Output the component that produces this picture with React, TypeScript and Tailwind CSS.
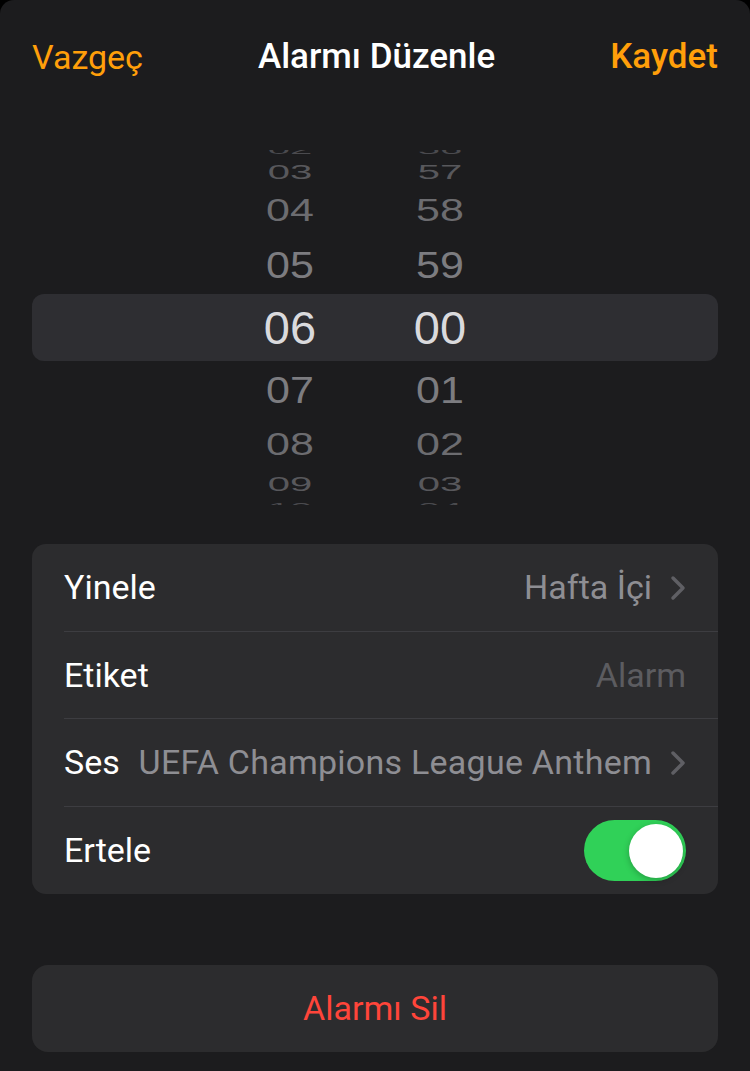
export default function App() {
    const rows = [
        { v: "02", m: "56", h: "h-[15px]", t: "text-[40px] scale-y-[0.3] text-[#4a4a4e]" },
        { v: "03", m: "57", h: "h-[29px]", t: "text-[40px] scale-y-[0.49] text-[#58585c]" },
        { v: "04", m: "58", h: "h-[49px]", t: "text-[43px] scale-y-[0.74] text-[#6c6c70]" },
        { v: "05", m: "59", h: "h-[61px]", t: "text-[43px] scale-y-[0.88] text-[#7c7c80]" },
        { v: "06", m: "00", h: "h-[63px]", t: "text-[47px] text-[#dadadd]" },
        { v: "07", m: "01", h: "h-[63px]", t: "text-[43px] scale-y-[0.88] text-[#7c7c80]" },
        { v: "08", m: "02", h: "h-[45px]", t: "text-[43px] scale-y-[0.74] text-[#6c6c70]" },
        { v: "09", m: "03", h: "h-[33px]", t: "text-[40px] scale-y-[0.49] text-[#58585c]" },
        { v: "10", m: "04", h: "h-[15px]", t: "text-[40px] scale-y-[0.3] text-[#4a4a4e]" },
    ];

    return (
        <div className="min-h-[1071px] bg-black" style={{ fontFamily: "Roboto, 'Liberation Sans', sans-serif" }}>
            <div className="min-h-[1071px] rounded-t-[14px] bg-[#1c1c1e] px-8">
                {/* Header */}
                <div className="flex h-[114px] items-center justify-between">
                    <button className="text-[34px] text-[#ff9f0a]">Vazgeç</button>
                    <div className="text-[35px] font-medium text-white">Alarmı Düzenle</div>
                    <button className="text-[35px] font-medium text-[#ff9f0a]">Kaydet</button>
                </div>

                {/* Time picker */}
                <div className="relative mt-[36px] h-[355px] overflow-hidden">
                    <div className="absolute left-0 right-0 top-[144px] h-[67px] rounded-[12px] bg-[#2e2e32]" />
                    <div className="relative -mt-[8px] flex" style={{ fontFamily: "'Liberation Sans', Arial, sans-serif" }}>
                        <div className="ml-[208px] flex w-[100px] flex-col">
                            {rows.map((r, i) => (
                                <div key={i} className={`flex items-center justify-center ${r.h}`}>
                                    <span className={`block leading-none ${r.t}`}>{r.v}</span>
                                </div>
                            ))}
                        </div>
                        <div className="ml-[50px] flex w-[100px] flex-col">
                            {rows.map((r, i) => (
                                <div key={i} className={`flex items-center justify-center ${r.h}`}>
                                    <span className={`block leading-none ${r.t}`}>{r.m}</span>
                                </div>
                            ))}
                        </div>
                    </div>
                </div>

                {/* Settings */}
                <div className="mt-[39px] rounded-[14px] bg-[#2c2c2e]">
                    <div className="flex h-[87px] items-center justify-between px-8">
                        <span className="text-[34px] text-white">Yinele</span>
                        <span className="flex items-center gap-[18px] text-[34px] text-[#8e8e93]">
                            Hafta İçi
                            <Chevron />
                        </span>
                    </div>
                    <div className="ml-8 h-px bg-[#3d3d41]" />
                    <div className="flex h-[86px] items-center justify-between px-8">
                        <span className="text-[34px] text-white">Etiket</span>
                        <span className="text-[34px] text-[#5c5c60]">Alarm</span>
                    </div>
                    <div className="ml-8 h-px bg-[#3d3d41]" />
                    <div className="flex h-[87px] items-center justify-between px-8">
                        <span className="text-[34px] text-white">Ses</span>
                        <span className="flex items-center gap-[18px] text-[34px] tracking-[0.25px] text-[#8e8e93]">
                            UEFA Champions League Anthem
                            <Chevron />
                        </span>
                    </div>
                    <div className="ml-8 h-px bg-[#3d3d41]" />
                    <div className="flex h-[87px] items-center justify-between px-8">
                        <span className="text-[34px] text-white">Ertele</span>
                        <div className="flex h-[61px] w-[102px] items-center justify-end rounded-full bg-[#30d158] px-[3px]">
                            <div className="h-[54px] w-[54px] rounded-full bg-white shadow-[0_2px_6px_rgba(0,0,0,0.25)]" />
                        </div>
                    </div>
                </div>

                {/* Delete */}
                <button className="mt-[71px] flex h-[87px] w-full items-center justify-center rounded-[16px] bg-[#2c2c2e] text-[34px] text-[#ff453a]">
                    Alarmı Sil
                </button>
            </div>
        </div>
    );
}

function Chevron() {
    return (
        <svg width="16" height="26" viewBox="0 0 16 26" fill="none">
            <path d="M3 3 L13 13 L3 23" stroke="#5f5f64" strokeWidth="3.5" strokeLinecap="round" strokeLinejoin="round" />
        </svg>
    );
}
